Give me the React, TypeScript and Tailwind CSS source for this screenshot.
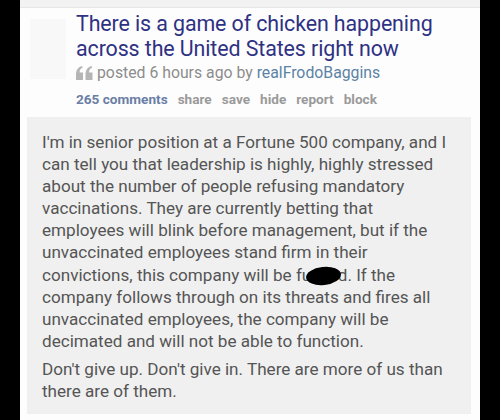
import React from 'react';

const font = { fontFamily: 'Roboto, "Noto Sans", Arial, sans-serif' };

const QuoteIcon = () => (
  <svg width="17" height="14" viewBox="0 0 17 14" className="shrink-0">
    {/* two "6" shaped quote marks */}
    <path d="M0 14V8.5C0 4 2 1.2 6 0l.8 1.6C4.6 2.6 3.6 4.2 3.5 6.5H7V14Z" fill="#b5b5b5" />
    <path d="M9.5 14V8.5C9.5 4 11.5 1.2 15.5 0l.8 1.6c-2.2 1-3.2 2.6-3.3 4.9h3.5V14Z" fill="#b5b5b5" />
  </svg>
);

const actions = ['share', 'save', 'hide', 'report', 'block'];

export default function App() {
  return (
    <div className="w-[500px] h-[420px] bg-black flex overflow-hidden" style={font}>
      <div className="ml-[20px] w-[460px] h-full bg-[#fdfdfd] flex flex-col">
        {/* top strip */}
        <div className="h-[8px] bg-[#f2f2f2] border-b border-[#e6e6e6] shrink-0" />

        {/* post header */}
        <div className="flex pt-[3px] shrink-0">
          <div className="w-[56px] shrink-0 flex justify-center pt-[8px]">
            <div className="w-[36px] h-[60px] bg-[#f8f8f8]" />
          </div>
          <div className="flex flex-col">
            <h1 className="text-[21.4px] leading-[25px] text-[#2f3183] tracking-[-0.1px] whitespace-nowrap">
              There is a game of chicken happening
              <br />
              across the United States right now
            </h1>
            <div className="flex items-center gap-[4px] h-[20px] mt-[2px] text-[15.8px] text-[#8d8d8d] whitespace-nowrap">
              <QuoteIcon />
              <span>
                posted 6 hours ago by <span className="text-[#5b83a6]">realFrodoBaggins</span>
              </span>
            </div>
            <div className="flex items-center gap-[10px] h-[18px] mt-[7px] text-[13.6px] font-bold whitespace-nowrap">
              <span className="text-[#6a7ea6]">265 comments</span>
              {actions.map((a) => (
                <span key={a} className="text-[#9a9a9a]">
                  {a}
                </span>
              ))}
            </div>
          </div>
        </div>

        {/* comment body */}
        <div className="mt-[9px] ml-[7px] mr-[9px] h-[297px] bg-[#f0f0f0] pl-[15px] pt-[14px] text-[17.1px] leading-[22.1px] text-[#555555] whitespace-nowrap">
          <p>
            I'm in senior position at a Fortune 500 company, and I<br />
            can tell you that leadership is highly, highly stressed<br />
            about the number of people refusing mandatory<br />
            vaccinations. They are currently betting that<br />
            employees will blink before management, but if the<br />
            unvaccinated employees stand firm in their<br />
            convictions, this company will be fu
            <span className="relative">
              cke
              <span className="absolute left-[-5px] right-[-3px] top-[2px] bottom-[0px] bg-black rounded-[50%] -rotate-6" />
            </span>
            d. If the<br />
            company follows through on its threats and fires all<br />
            unvaccinated employees, the company will be<br />
            decimated and will not be able to function.
          </p>
          <p className="mt-[6px]">
            Don't give up. Don't give in. There are more of us than<br />
            there are of them.
          </p>
        </div>
      </div>
    </div>
  );
}
